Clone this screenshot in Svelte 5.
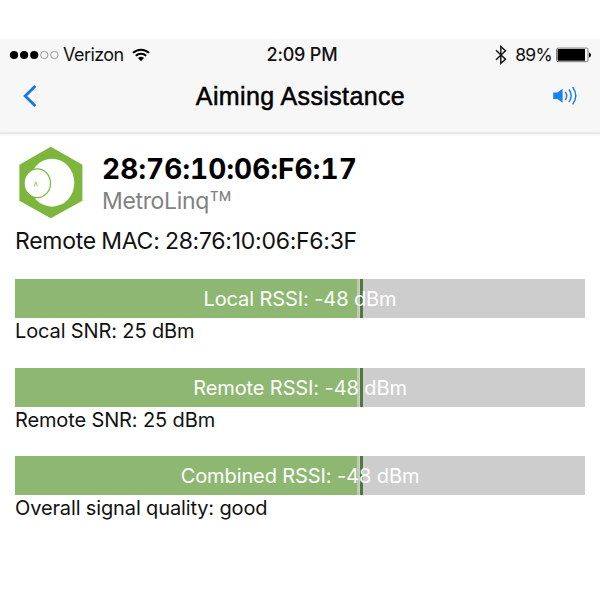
<script>
	const carrier = "Verizon";
	const battery = 89;
	const device = { mac: "28:76:10:06:F6:17", model: "MetroLinq" };
	const remoteMac = "28:76:10:06:F6:3F";

	const signals = [
		{ label: "Local RSSI: -48 dBm", note: "Local SNR: 25 dBm", level: 60, peak: 60.45 },
		{ label: "Remote RSSI: -48 dBm", note: "Remote SNR: 25 dBm", level: 60, peak: 60.45 },
		{ label: "Combined RSSI: -48 dBm", note: "Overall signal quality: good", level: 60, peak: 60.45 },
	];

	let sound = $state(true);
</script>

<div class="screen">
	<header>
		<div class="status">
			<div class="network">
				<svg width="50" height="10" viewBox="0 0 50 10">
					{#each [0, 1, 2, 3, 4] as i}
						<circle
							class:empty={i > 2}
							cx={5 + i * 10.1}
							cy="5"
							r={i > 2 ? 3.7 : 4.1}
						/>
					{/each}
				</svg>
				<span class="carrier">{carrier}</span>
				<svg class="wifi" width="18" height="14" viewBox="0 0 18 14">
					<path d="M1 4.9a11.5 11.5 0 0 1 16 0M3.8 7.8a7.4 7.4 0 0 1 10.4 0" />
					<path class="solid" d="M6 10.1a4.3 4.3 0 0 1 6 0L9 13.2z" />
				</svg>
			</div>
			<span class="time">2:09 PM</span>
			<div class="power">
				<svg class="bluetooth" width="12" height="20" viewBox="0 0 12 20">
					<path d="M1 5.3l9.5 9L5.8 18.4V1.6l4.7 4.1L1 14.7" />
				</svg>
				<span class="percent">{battery}%</span>
				<svg width="35" height="16" viewBox="0 0 35 16">
					<rect class="case" x=".6" y="1.1" width="31.4" height="13.6" rx="1.5" />
					<rect x="1.6" y="2.1" width={0.308 * battery} height="11.6" rx=".5" />
					<path d="M33 5.5q2 .5 2 2.5t-2 2.5z" />
				</svg>
			</div>
		</div>
		<nav>
			<button class="back" aria-label="Back">
				<svg width="14" height="22" viewBox="0 0 14 22">
					<path d="M12.3 1L2.2 11l10.1 10" />
				</svg>
			</button>
			<h1>Aiming Assistance</h1>
			<button class="sound" aria-label="Sound" onclick={() => (sound = !sound)}>
				<svg width="25" height="20" viewBox="0 0 25 20">
					<path class="speaker" d="M.2 6.4h4.2L9.6 2.7v14.1l-5.2-3.7H.2z" />
					{#if sound}
						<path d="M12.3 5.8q2.8 4 0 8M16 3.5q4.4 6.3 0 12.6M19.7 1.2q6.2 8.6 0 17.2" />
					{/if}
				</svg>
			</button>
		</nav>
	</header>

	<main>
		<div class="device">
			<svg width="64" height="73" viewBox="0 0 64 73">
				<path class="hex" d="M31.8.8l31.6 18v36L31.8 72.2.4 54.8v-36z" />
				<ellipse class="dish" cx="33" cy="36.7" rx="22.3" ry="24" />
				<ellipse class="feed" cx="18.3" cy="37.2" rx="13.2" ry="14.4" />
				<path class="mark" d="M15.3 40.4l1-3.6q.5-1.6 1.1 0l1 3.6" />
			</svg>
			<div>
				<h2>{device.mac}</h2>
				<p class="model">{device.model}<span>™</span></p>
			</div>
		</div>
		<p class="remote">Remote MAC: {remoteMac}</p>
		{#each signals as signal}
			<section>
				<div class="bar">
					<div class="fill" style="width: {signal.level}%"></div>
					<div class="peak" style="left: {signal.peak}%"></div>
					<span>{signal.label}</span>
				</div>
				<p class="note">{signal.note}</p>
			</section>
		{/each}
	</main>
</div>

<style>
	:global(body) {
		margin: 0;
		background: #fff;
	}
	.screen {
		width: 600px;
		height: 600px;
		box-sizing: border-box;
		padding-top: 39px;
		overflow: hidden;
		font-family: Inter, "Liberation Sans", sans-serif;
		color: #111;
	}
	h1,
	h2,
	p {
		margin: 0;
		white-space: nowrap;
	}
	svg {
		display: block;
		flex: none;
	}
	header {
		height: 93px;
		background: #f7f7f7;
		border-bottom: 2px solid #eaeaea;
		box-shadow: 0 1px 2px #f2f2f2;
	}
	.status {
		display: grid;
		grid-template-columns: 1fr auto 1fr;
		align-items: center;
		height: 31px;
		padding: 0 9px;
		font-size: 18px;
	}
	.network,
	.power {
		display: flex;
		align-items: center;
	}
	.power {
		justify-content: flex-end;
	}
	.empty {
		fill: none;
		stroke: #777;
		stroke-width: 0.7;
	}
	.carrier {
		margin-left: 4px;
		letter-spacing: -0.55px;
	}
	.wifi {
		margin-left: 8px;
		fill: none;
		stroke: #000;
		stroke-width: 2;
	}
	.solid {
		fill: #000;
		stroke: none;
	}
	.time {
		padding-left: 4px;
		font-weight: 500;
		letter-spacing: -0.2px;
	}
	.bluetooth {
		fill: none;
		stroke: #111;
		stroke-width: 1.4;
	}
	.percent {
		margin: 0 4px 0 8px;
		font-size: 17.5px;
		letter-spacing: -0.7px;
	}
	.case {
		fill: #fff;
		stroke: #555;
		stroke-width: 0.8;
	}
	nav {
		display: grid;
		grid-template-columns: 1fr auto 1fr;
		align-items: center;
		height: 52px;
		padding: 0 22px 0 23px;
	}
	button {
		padding: 0;
		border: 0;
		background: none;
		fill: none;
		stroke: #1577e6;
	}
	.back {
		stroke-width: 2.8;
	}
	.sound {
		justify-self: end;
		stroke-width: 1.4;
	}
	.speaker {
		fill: #1680f5;
		stroke: none;
	}
	h1 {
		font: 400 25px "Liberation Sans", sans-serif;
		letter-spacing: 0.38px;
		color: #000;
		-webkit-text-stroke: 0.5px #000;
	}
	main {
		padding: 12px 15px 0;
	}
	.device {
		display: flex;
		gap: 19px;
		padding-left: 4px;
	}
	.hex {
		fill: #7cb63d;
	}
	.dish {
		fill: #fff;
	}
	.feed {
		fill: #fff;
		stroke: #7cb63d;
		stroke-width: 1.2;
	}
	.mark {
		fill: none;
		stroke: #7cb63d;
		stroke-width: 0.8;
	}
	h2 {
		margin-top: 6px;
		font-size: 28px;
		font-weight: 700;
		font-variant-numeric: tabular-nums;
		line-height: 34px;
		letter-spacing: 0.1px;
		color: #000;
	}
	.model {
		font-size: 23px;
		line-height: 30px;
		letter-spacing: -0.35px;
		color: #828282;
	}
	.model span {
		font-size: 38px;
		font-weight: 300;
		line-height: 0;
		vertical-align: -10px;
	}
	.remote {
		margin-top: 6px;
		padding-top: 1px;
		font-size: 23px;
		line-height: 30px;
		letter-spacing: -0.27px;
		word-spacing: -0.8px;
	}
	section {
		height: 88.5px;
	}
	.remote + section {
		margin-top: 23.4px;
	}
	.bar {
		position: relative;
		display: flex;
		justify-content: center;
		height: 39px;
		background: #cdcdcd;
	}
	.fill {
		position: absolute;
		left: 0;
		top: 0;
		bottom: 0;
		background: #8eb871;
		border-right: 2px solid #bccbb0;
	}
	.peak {
		position: absolute;
		top: 0;
		bottom: 0;
		width: 3px;
		background: #507a37;
	}
	.bar span {
		position: relative;
		font-size: 20px;
		line-height: 41px;
		letter-spacing: -0.1px;
		color: #fff;
	}
	.note {
		font-size: 20px;
		line-height: 27px;
		letter-spacing: -0.13px;
	}
</style>
